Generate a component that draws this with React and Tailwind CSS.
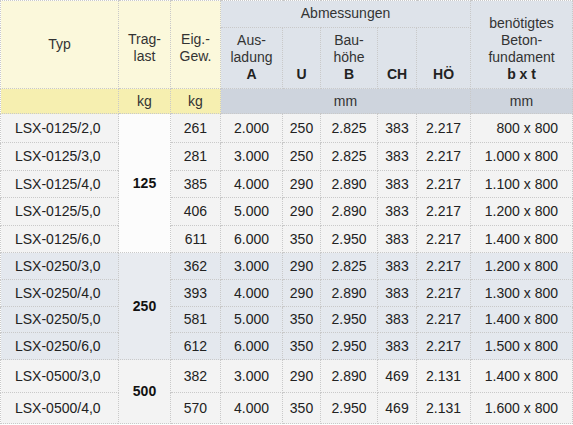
const rows = [
  { typ: 'LSX-0125/2,0', eig: '261', a: '2.000', u: '250', b: '2.825', ch: '383', ho: '2.217', bt: '800 x 800', h: 'h-[29px]' },
  { typ: 'LSX-0125/3,0', eig: '281', a: '3.000', u: '250', b: '2.825', ch: '383', ho: '2.217', bt: '1.000 x 800', h: 'h-[28px]' },
  { typ: 'LSX-0125/4,0', eig: '385', a: '4.000', u: '290', b: '2.890', ch: '383', ho: '2.217', bt: '1.100 x 800', h: 'h-[27px]' },
  { typ: 'LSX-0125/5,0', eig: '406', a: '5.000', u: '290', b: '2.890', ch: '383', ho: '2.217', bt: '1.200 x 800', h: 'h-[28px]' },
  { typ: 'LSX-0125/6,0', eig: '611', a: '6.000', u: '350', b: '2.950', ch: '383', ho: '2.217', bt: '1.400 x 800', h: 'h-[27px]' },
  { typ: 'LSX-0250/3,0', eig: '362', a: '3.000', u: '290', b: '2.825', ch: '383', ho: '2.217', bt: '1.200 x 800', h: 'h-[27px]' },
  { typ: 'LSX-0250/4,0', eig: '393', a: '4.000', u: '290', b: '2.890', ch: '383', ho: '2.217', bt: '1.300 x 800', h: 'h-[27px]' },
  { typ: 'LSX-0250/5,0', eig: '581', a: '5.000', u: '350', b: '2.950', ch: '383', ho: '2.217', bt: '1.400 x 800', h: 'h-[26px]' },
  { typ: 'LSX-0250/6,0', eig: '612', a: '6.000', u: '350', b: '2.950', ch: '383', ho: '2.217', bt: '1.500 x 800', h: 'h-[27px]' },
  { typ: 'LSX-0500/3,0', eig: '382', a: '3.000', u: '290', b: '2.890', ch: '469', ho: '2.131', bt: '1.400 x 800', h: 'h-[33px]' },
  { typ: 'LSX-0500/4,0', eig: '570', a: '4.000', u: '350', b: '2.950', ch: '469', ho: '2.131', bt: '1.600 x 800', h: 'h-[31px]' },
]

// first row index of each Traglast group -> [label, rowspan, cell bg]
const groups = {
  0: ['125', 5, 'bg-[#fcfcfc]'],
  5: ['250', 4, 'bg-[#e8ebf0]'],
  9: ['500', 2, 'bg-[#f3f3f3]'],
}

const cell = 'border border-dotted border-[#c9c9c9] p-0'

export default function App() {
  return (
    <div className="bg-white text-[14px] leading-[17px] text-[#222]" style={{ fontFamily: '"Liberation Sans", Arial, sans-serif' }}>
      <table className="w-[573px] table-fixed border-collapse">
        <colgroup>
          <col className="w-[118px]" />
          <col className="w-[52px]" />
          <col className="w-[50px]" />
          <col className="w-[62px]" />
          <col className="w-[38px]" />
          <col className="w-[57px]" />
          <col className="w-[39px]" />
          <col className="w-[54px]" />
          <col />
        </colgroup>
        <thead className="text-[#333] font-normal">
          <tr className="h-[27px]">
            <th rowSpan={2} className={`${cell} bg-[#fbf8db] font-normal align-middle`}>Typ</th>
            <th rowSpan={2} className={`${cell} bg-[#fbf8db] font-normal align-middle pt-[6px]`}>Trag-<br />last</th>
            <th rowSpan={2} className={`${cell} bg-[#fbf8db] font-normal align-middle pt-[6px]`}>Eig.-<br />Gew.</th>
            <th colSpan={5} className={`${cell} bg-[#dee3ea] font-normal align-middle pb-[1px]`}>Abmessungen</th>
            <th rowSpan={2} className={`${cell} bg-[#dee3ea] font-normal align-bottom pb-[5px]`}>
              benötigtes<br />Beton-<br />fundament<br /><b className="font-bold text-[#222]">b x t</b>
            </th>
          </tr>
          <tr className="h-[61px]">
            <th className={`${cell} bg-[#dee3ea] font-normal align-bottom pb-[5px]`}>
              Aus-<br />ladung<br /><b className="font-bold text-[#222]">A</b>
            </th>
            <th className={`${cell} bg-[#dee3ea] font-bold text-[#222] align-bottom pb-[5px]`}>U</th>
            <th className={`${cell} bg-[#dee3ea] font-normal align-bottom pb-[5px]`}>
              Bau-<br />höhe<br /><b className="font-bold text-[#222]">B</b>
            </th>
            <th className={`${cell} bg-[#dee3ea] font-bold text-[#222] align-bottom pb-[5px]`}>CH</th>
            <th className={`${cell} bg-[#dee3ea] font-bold text-[#222] align-bottom pb-[5px]`}>HÖ</th>
          </tr>
          <tr className="h-[25px]">
            <th className={`${cell} bg-[#f6efb0] font-normal`}></th>
            <th className={`${cell} bg-[#f6efb0] font-normal`}>kg</th>
            <th className={`${cell} bg-[#f6efb0] font-normal`}>kg</th>
            <th colSpan={5} className={`${cell} bg-[#ced4dd] font-normal`}>mm</th>
            <th className={`${cell} bg-[#ced4dd] font-normal`}>mm</th>
          </tr>
        </thead>
        <tbody>
          {rows.map((r, i) => {
            const bg = i >= 5 && i < 9 ? 'bg-[#e4e8ee]' : 'bg-[#f3f3f3]'
            const g = groups[i]
            return (
              <tr key={r.typ} className={`${r.h} ${bg}`}>
                <td className={`${cell} pl-[14px]`}>{r.typ}</td>
                {g && (
                  <td rowSpan={g[1]} className={`${cell} ${g[2]} text-center font-bold text-[#111]`}>{g[0]}</td>
                )}
                <td className={`${cell} text-right pr-[13px]`}>{r.eig}</td>
                <td className={`${cell} text-center`}>{r.a}</td>
                <td className={`${cell} text-center`}>{r.u}</td>
                <td className={`${cell} text-center`}>{r.b}</td>
                <td className={`${cell} text-center`}>{r.ch}</td>
                <td className={`${cell} text-center`}>{r.ho}</td>
                <td className={`${cell} text-right pr-[14px]`}>{r.bt}</td>
              </tr>
            )
          })}
        </tbody>
      </table>
    </div>
  )
}
